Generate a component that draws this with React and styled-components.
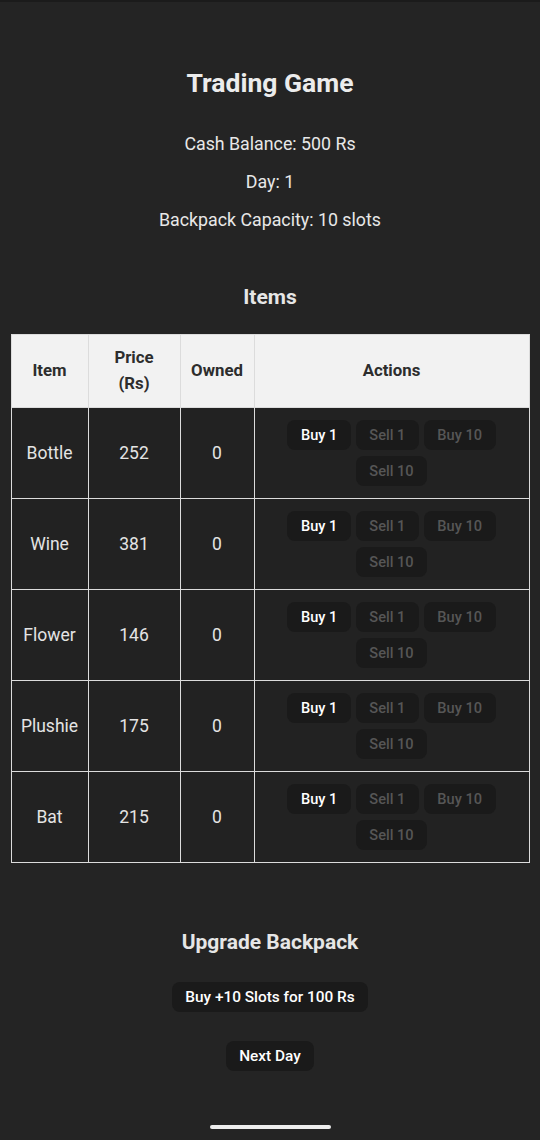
import React from "react";
import styled, { createGlobalStyle } from "styled-components";

const Global = createGlobalStyle`
  html, body { margin: 0; padding: 0; background: #242424; }
  body { font-family: Roboto, "Noto Sans", "Liberation Sans", sans-serif; }
  * { box-sizing: border-box; }
`;

const Page = styled.div`
  min-height: 1140px;
  display: flex;
  flex-direction: column;
  align-items: center;
  background: #242424;
  border-top: 2px solid #1b1b1b;
  color: rgba(255, 255, 255, 0.87);
  padding: 0 11px;
`;

const Title = styled.h1`
  margin: 64.5px 0 0;
  font-size: 26.5px;
  line-height: 31px;
  font-weight: 700;
  color: #ececec;
`;

const Stats = styled.div`
  margin-top: 35.5px;
  display: flex;
  flex-direction: column;
  align-items: center;
  gap: 16px;
`;

const Stat = styled.p`
  margin: 0;
  font-size: 17.8px;
  line-height: 22px;
  color: #e8e8e8;
`;

const SectionTitle = styled.h2`
  margin: ${(p) => p.$top}px 0 0;
  font-size: 21px;
  line-height: 24px;
  font-weight: 700;
  color: #e6e6e6;
`;

const Table = styled.table`
  margin-top: 25px;
  width: 518px;
  border-collapse: collapse;
  table-layout: fixed;
  border: 1px solid #dcdcdc;
`;

const HeadCell = styled.th`
  width: ${(p) => p.$w}px;
  background: #f2f2f2;
  color: #2d2d2d;
  font-size: 16.8px;
  font-weight: 700;
  line-height: 26px;
  padding: 9px 4px 11px;
  border: 1px solid #dcdcdc;
  text-align: center;
  height: 73px;
`;

const Cell = styled.td`
  background: #222222;
  color: #e4e4e4;
  font-size: 17.5px;
  line-height: 22px;
  text-align: center;
  vertical-align: middle;
  border: 1px solid #dcdcdc;
  padding: 8px 4px;
  height: 91px;
`;

const Actions = styled.div`
  display: flex;
  flex-wrap: wrap;
  justify-content: center;
  padding: 0 8px;
`;

const Btn = styled.button`
  margin: ${(p) => (p.$small ? "3px 2.5px" : "0")};
  background: #1a1a1a;
  border: 1px solid transparent;
  border-radius: 8px;
  font-family: Roboto, "Noto Sans", "Liberation Sans", sans-serif;
  font-size: ${(p) => (p.$small ? "14.6px" : "15.4px")};
  font-weight: 500;
  line-height: 18px;
  padding: 5px 12.5px;
  color: ${(p) => (p.disabled ? "#565656" : "#ffffff")};
  cursor: ${(p) => (p.disabled ? "default" : "pointer")};
`;

const Stack = styled.div`
  display: flex;
  flex-direction: column;
  align-items: center;
  gap: ${(p) => p.$gap}px;
  margin-top: ${(p) => p.$top}px;
`;

const HomeBar = styled.div`
  margin-top: auto;
  margin-bottom: 11px;
  width: 121px;
  height: 4px;
  border-radius: 2px;
  background: #ededed;
`;

const items = [
  { name: "Bottle", price: 252, owned: 0 },
  { name: "Wine", price: 381, owned: 0 },
  { name: "Flower", price: 146, owned: 0 },
  { name: "Plushie", price: 175, owned: 0 },
  { name: "Bat", price: 215, owned: 0 },
];

export default function App() {
  return (
    <>
      <Global />
      <Page>
        <Title>Trading Game</Title>
        <Stats>
          <Stat>Cash Balance: 500 Rs</Stat>
          <Stat>Day: 1</Stat>
          <Stat>Backpack Capacity: 10 slots</Stat>
        </Stats>
        <SectionTitle $top={54}>Items</SectionTitle>
        <Table>
          <thead>
            <tr>
              <HeadCell $w={77}>Item</HeadCell>
              <HeadCell $w={92}>
                Price
                <br />
                (Rs)
              </HeadCell>
              <HeadCell $w={74}>Owned</HeadCell>
              <HeadCell $w={275}>Actions</HeadCell>
            </tr>
          </thead>
          <tbody>
            {items.map((it) => (
              <tr key={it.name}>
                <Cell>{it.name}</Cell>
                <Cell>{it.price}</Cell>
                <Cell>{it.owned}</Cell>
                <Cell>
                  <Actions>
                    <Btn $small>Buy 1</Btn>
                    <Btn $small disabled>Sell 1</Btn>
                    <Btn $small disabled>Buy 10</Btn>
                    <Btn $small disabled>Sell 10</Btn>
                  </Actions>
                </Cell>
              </tr>
            ))}
          </tbody>
        </Table>
        <SectionTitle $top={67}>Upgrade Backpack</SectionTitle>
        <Stack $top={28} $gap={29}>
          <Btn>Buy +10 Slots for 100 Rs</Btn>
          <Btn>Next Day</Btn>
        </Stack>
        <HomeBar />
      </Page>
    </>
  );
}
